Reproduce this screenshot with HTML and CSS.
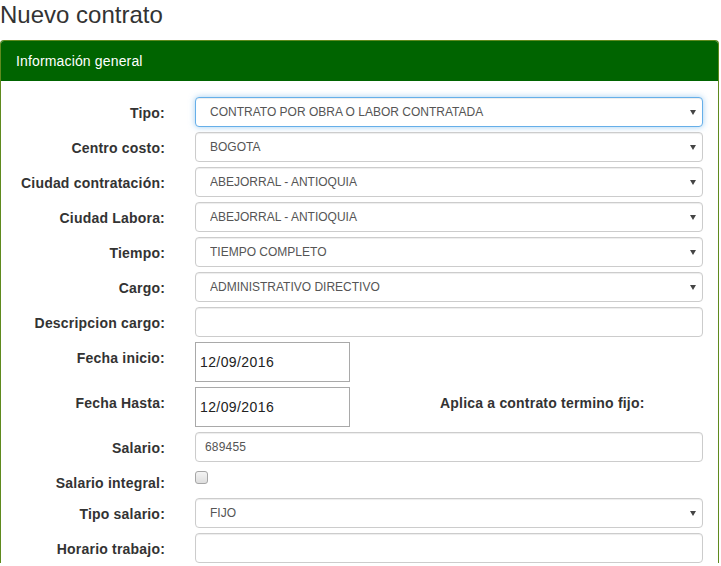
FILE: index.html
```html
<!DOCTYPE html>
<html lang="es">
<head>
<meta charset="utf-8">
<title>Nuevo contrato</title>
<link rel="stylesheet" href="styles.css">
</head>
<body>
<h3 class="page-title">Nuevo contrato</h3>
<div class="panel">
  <div class="panel-heading">Información general</div>
  <div class="panel-body">
    <form class="form-grid">
      <label class="lbl">Tipo:</label>
      <div class="sel-wrap"><select class="ctl sel focused"><option>CONTRATO POR OBRA O LABOR CONTRATADA</option></select><span class="arrow"></span></div>

      <label class="lbl">Centro costo:</label>
      <div class="sel-wrap"><select class="ctl sel"><option>BOGOTA</option></select><span class="arrow"></span></div>

      <label class="lbl">Ciudad contratación:</label>
      <div class="sel-wrap"><select class="ctl sel"><option>ABEJORRAL - ANTIOQUIA</option></select><span class="arrow"></span></div>

      <label class="lbl">Ciudad Labora:</label>
      <div class="sel-wrap"><select class="ctl sel"><option>ABEJORRAL - ANTIOQUIA</option></select><span class="arrow"></span></div>

      <label class="lbl">Tiempo:</label>
      <div class="sel-wrap"><select class="ctl sel"><option>TIEMPO COMPLETO</option></select><span class="arrow"></span></div>

      <label class="lbl">Cargo:</label>
      <div class="sel-wrap"><select class="ctl sel"><option>ADMINISTRATIVO DIRECTIVO</option></select><span class="arrow"></span></div>

      <label class="lbl">Descripcion cargo:</label>
      <input class="ctl txt" type="text">

      <label class="lbl">Fecha inicio:</label>
      <div class="date-row"><input class="date" type="text" value="12/09/2016"></div>

      <label class="lbl">Fecha Hasta:</label>
      <div class="date-row"><input class="date" type="text" value="12/09/2016"><span class="lbl lbl-inline">Aplica a contrato termino fijo:</span></div>

      <label class="lbl">Salario:</label>
      <input class="ctl txt" type="text" value="689455">

      <label class="lbl">Salario integral:</label>
      <div><input class="chk" type="checkbox"></div>

      <label class="lbl">Tipo salario:</label>
      <div class="sel-wrap"><select class="ctl sel"><option>FIJO</option></select><span class="arrow"></span></div>

      <label class="lbl">Horario trabajo:</label>
      <input class="ctl txt" type="text">
    </form>
  </div>
</div>
</body>
</html>
```

FILE: styles.css
```css
html, body {
  margin: 0;
  padding: 0;
  background: #fff;
  font-family: "Liberation Sans", Arial, Helvetica, sans-serif;
  font-size: 14px;
  color: #333;
}

.page-title {
  margin: 2px 0 12px 0;
  font-size: 24px;
  line-height: 26px;
  font-weight: normal;
  color: #333;
}

.panel {
  width: 719px;
  box-sizing: border-box;
  border: 1px solid #5f8a1e;
  border-bottom: none;
  border-radius: 4px 4px 0 0;
}

.panel-heading {
  background: #006400;
  color: #fff;
  padding: 10px 15px;
  line-height: 20px;
  font-size: 14px;
  letter-spacing: 0.15px;
  border-radius: 3px 3px 0 0;
}

.panel-body {
  padding: 16px 15px 0 0;
}

.form-grid {
  display: grid;
  grid-template-columns: 164px 508px;
  column-gap: 30px;
  row-gap: 5px;
  margin: 0;
}

.lbl {
  display: block;
  text-align: right;
  font-weight: bold;
  font-size: 14px;
  line-height: 20px;
  padding-top: 6px;
  color: #333;
  letter-spacing: 0.2px;
  white-space: nowrap;
}

.ctl {
  display: block;
  width: 100%;
  height: 30px;
  box-sizing: border-box;
  border: 1px solid #ccc;
  border-radius: 4px;
  background: #fff;
  font-family: "Liberation Sans", Arial, sans-serif;
  font-size: 12px;
  color: #555;
  box-shadow: inset 0 1px 1px rgba(0, 0, 0, 0.075);
  margin: 0;
  outline: none;
}

.sel {
  -webkit-appearance: none;
  appearance: none;
  padding: 0 24px 0 14px;
}

.txt {
  padding: 0 9px;
  letter-spacing: 0.2px;
}

.focused {
  border-color: #66afe9;
  box-shadow: inset 0 1px 1px rgba(0, 0, 0, 0.075), 0 0 6px rgba(102, 175, 233, 0.6);
}

.sel-wrap {
  position: relative;
}

.arrow {
  position: absolute;
  right: 7px;
  top: 13px;
  width: 0;
  height: 0;
  border-left: 3px solid transparent;
  border-right: 3px solid transparent;
  border-top: 5px solid #444;
  pointer-events: none;
}

.date-row {
  display: flex;
  align-items: flex-start;
}

.date {
  width: 155px;
  height: 40px;
  box-sizing: border-box;
  border: 1px solid #a9a9a9;
  border-radius: 0;
  padding: 0 4px;
  margin: 0;
  font-family: "Liberation Sans", Arial, sans-serif;
  font-size: 14px;
  letter-spacing: 0.4px;
  color: #222;
  outline: none;
}

.lbl-inline {
  margin-left: 90px;
  padding-top: 6px;
  text-align: left;
}

.chk {
  -webkit-appearance: none;
  appearance: none;
  display: block;
  width: 13px;
  height: 13px;
  margin: 4px 0 0 0;
  box-sizing: border-box;
  border: 1px solid #a6a6a6;
  border-radius: 3px;
  background: linear-gradient(#f4f4f4, #dedede);
}
```
